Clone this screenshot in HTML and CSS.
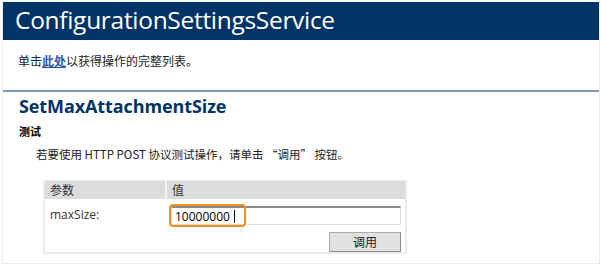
FILE: index.html
```html
<!DOCTYPE html>
<html lang="zh-CN">
<head>
<meta charset="utf-8">
<link rel="stylesheet" href="styles.css">
</head>
<body>
<div class="page">
  <div class="banner">ConfigurationSettingsService</div>
  <p class="intro">单击<a class="link" href="#">此处</a>以获得操作的完整列表。</p>
  <div class="rule"></div>
  <h2 class="op">SetMaxAttachmentSize</h2>
  <h3 class="sub">测试</h3>
  <p class="hint">若要使用 HTTP POST 协议测试操作，请单击 “调用” 按钮。</p>
  <div class="tablewrap">
    <div class="grid">
      <div class="th c1">参数</div>
      <div class="th c2">值</div>
      <div class="td c1">maxSize:</div>
      <div class="td c2">
        <div class="field"><span class="val">10000000</span><span class="caret"></span></div>
        <span class="focus"></span>
      </div>
      <div class="td c1"></div>
      <div class="td c2 btncell"><button class="btn">调用</button></div>
    </div>
  </div>
</div>
</body>
</html>
```
FILE: styles.css
```css
* { box-sizing: border-box; }
html, body { margin: 0; padding: 0; background: #fff; }
body {
  font-family: "Open Sans", "Noto Sans CJK SC", sans-serif;
  color: #000;
}
.page {
  margin: 2px 1px 2px 2px;
  height: 262px;
  border: 1px solid #ececec;
  border-top: none;
}
.banner {
  background: #003366;
  color: #fff;
  height: 38px;
  padding-left: 12px;
  font-size: 24.5px;
  line-height: 36px;
  letter-spacing: -0.3px;
}
.intro {
  margin: 0;
  padding: 13px 0 0 15px;
  height: 50px;
  font-size: 12px;
  line-height: 16px;
  font-family: "Noto Sans CJK SC", sans-serif;
  color: #222;
}
.link { color: #2a55a0; text-decoration: underline; font-weight: bold; }
.rule {
  height: 2px;
  background: #8299b3;
}
.op {
  margin: 0;
  padding: 3px 0 0 16px;
  height: 28px;
  font-size: 18px;
  line-height: 22px;
  font-weight: bold;
  color: #003366;
  letter-spacing: -0.1px;
}
.sub {
  margin: 0;
  padding: 4px 0 0 16px;
  height: 22px;
  font-size: 11px;
  line-height: 14px;
  font-weight: bold;
  font-family: "Noto Sans CJK SC", sans-serif;
}
.hint {
  margin: 0;
  padding: 5px 0 0 33px;
  height: 38px;
  font-size: 11.5px;
  line-height: 14px;
  font-family: "Noto Sans CJK SC", sans-serif;
  color: #222;
}
.tablewrap {
  margin-left: 40px;
  width: 364px;
  border: 2px solid #ebebeb;
  border-top-width: 1px;
}
.grid {
  display: grid;
  grid-template-columns: 122px 1fr;
  font-family: "Noto Sans CJK SC", sans-serif;
  font-size: 12px;
  color: #333;
}
.th {
  background: #dcdcdc;
  height: 18px;
  line-height: 18px;
  padding-left: 5px;
}
.th.c1 { border-right: 2px solid #f4f4f4; }
.td { position: relative; }
.td.c1 { padding: 8px 0 0 5px; line-height: 16px; font-family: "Open Sans", sans-serif; font-size: 12px; }
.td.c2 { padding: 7px 4px 0 4px; }
.field {
  height: 19px;
  border: 1px solid #dcdcdc;
  border-top: 2px solid #8a8a8a;
  display: flex;
  align-items: center;
  padding-left: 3px;
  font-family: "Open Sans", sans-serif;
  font-size: 12px;
  color: #000;
}
.caret {
  display: inline-block;
  width: 1px;
  height: 13px;
  background: #000;
  margin-left: 4px;
}
.focus {
  position: absolute;
  left: 2px;
  top: 5px;
  width: 77px;
  height: 23px;
  border: 2px solid #f5901e;
  border-radius: 4px;
}
.btncell {
  display: flex;
  justify-content: flex-end;
  padding-top: 5px;
  padding-bottom: 5px;
}
.btn {
  width: 72px;
  height: 20px;
  background: #e1e1e1;
  border: 1px solid #8c8c8c;
  border-top-color: #adadad;
  border-left-color: #adadad;
  font-family: "Noto Sans CJK SC", sans-serif;
  font-size: 12px;
  color: #222;
  padding: 0;
  line-height: 16px;
}
```
